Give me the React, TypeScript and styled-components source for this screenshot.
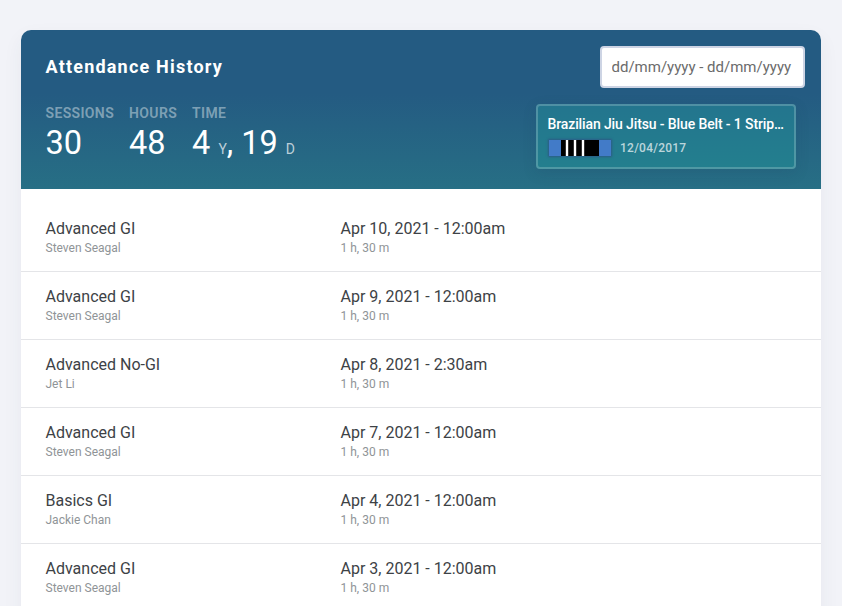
import styled, { createGlobalStyle } from 'styled-components'

const Palette = {
  page: '#f2f3f8',
  headerTop: '#245b82',
  headerBottom: '#276f85',
  text: '#3d4246',
  muted: '#8f9497',
  line: '#e4e5e8',
  beltBlue: '#427bc8',
}

const GlobalStyle = createGlobalStyle`
  * {
    box-sizing: border-box;
  }
  body {
    margin: 0;
    background: ${Palette.page};
    font-family: Roboto, sans-serif;
  }
`

const Page = styled.main`
  height: 100vh;
  padding: 30px 21px 0;
  overflow: hidden;
`

const Card = styled.section`
  min-height: 640px;
  background: #fff;
  border-radius: 10px;
  overflow: hidden;
  box-shadow: 0 8px 20px rgba(50, 60, 80, 0.06);
`

const Header = styled.header`
  height: 159px;
  padding: 16px 16px 0 24.5px;
  background: linear-gradient(180deg, ${Palette.headerTop} 40%, ${Palette.headerBottom} 100%);
`

const HeaderRow = styled.div<{ $gap?: string; $inset?: string }>`
  display: flex;
  justify-content: space-between;
  margin-top: ${({ $gap }) => $gap || '0'};
  padding-right: ${({ $inset }) => $inset || '0'};
`

const Title = styled.h1`
  margin: 0;
  color: #fff;
  font-size: 18px;
  font-weight: 700;
  line-height: 42px;
  letter-spacing: 1.2px;
`

const DateRange = styled.input`
  width: 205px;
  height: 42px;
  padding: 0 9.5px;
  border: 2px solid #cdd4e4;
  border-radius: 4px;
  background: #fff;
  font-family: inherit;
  font-size: 15px;
  outline: none;
  &::placeholder {
    color: #6b6b6b;
    opacity: 1;
  }
`

const Stats = styled.div`
  display: flex;
  gap: 15px;
`

const StatLabel = styled.div`
  color: rgba(255, 255, 255, 0.42);
  font-size: 14px;
  font-weight: 600;
  line-height: 18px;
  letter-spacing: 0.36px;
`

const StatValue = styled.div`
  color: #fff;
  font-size: 32.5px;
  line-height: 42px;
  white-space: nowrap;
`

const Unit = styled.span`
  color: rgba(255, 255, 255, 0.7);
  font-size: 14px;
`

const Rank = styled.div`
  width: 260px;
  height: 65px;
  padding: 9px 9px 0 9.5px;
  border: 2px solid rgba(255, 255, 255, 0.2);
  border-radius: 4px;
  background: linear-gradient(180deg, #23758e, #237f8e);
  background-origin: border-box;
  box-shadow: 0 4px 14px rgba(30, 60, 90, 0.15);
`

const RankName = styled.div`
  color: #fff;
  font-size: 14px;
  font-weight: 500;
  line-height: 18px;
  letter-spacing: -0.12px;
  white-space: nowrap;
`

const RankInfo = styled.div`
  display: flex;
  align-items: center;
  gap: 9px;
  margin-top: 7px;
  padding-left: 1.5px;
`

const Belt = styled.div`
  display: flex;
  width: 62px;
  height: 16px;
  padding: 0 12px;
  background: ${Palette.beltBlue};
  box-shadow: 0 0 2px 1px rgba(50, 70, 130, 0.6);
`

const BeltBar = styled.div`
  display: flex;
  gap: 4px;
  width: 38px;
  padding-left: 4px;
  background: #000;
`

const Stripe = styled.span`
  width: 4px;
  border: solid #333;
  border-width: 0 1px;
  background: #fff;
`

const RankDate = styled.span`
  color: rgba(255, 255, 255, 0.7);
  font-size: 12px;
  font-weight: 500;
  line-height: 16px;
  letter-spacing: 0.25px;
`

const List = styled.ul`
  margin: 0;
  padding: 15px 0 0;
  list-style: none;
`

const Row = styled.li`
  display: grid;
  grid-template-columns: 295px 1fr;
  height: 68px;
  padding: 14px 24px 0 24.5px;
  border-bottom: 1px solid ${Palette.line};
`

const Primary = styled.div`
  color: ${Palette.text};
  font-size: 16px;
  line-height: 21px;
`

const Secondary = styled.div`
  color: ${Palette.muted};
  font-size: 12px;
  line-height: 18px;
`

const sessions = [
  { name: 'Advanced GI', coach: 'Steven Seagal', date: 'Apr 10, 2021 - 12:00am' },
  { name: 'Advanced GI', coach: 'Steven Seagal', date: 'Apr 9, 2021 - 12:00am' },
  { name: 'Advanced No-GI', coach: 'Jet Li', date: 'Apr 8, 2021 - 2:30am' },
  { name: 'Advanced GI', coach: 'Steven Seagal', date: 'Apr 7, 2021 - 12:00am' },
  { name: 'Basics GI', coach: 'Jackie Chan', date: 'Apr 4, 2021 - 12:00am' },
  { name: 'Advanced GI', coach: 'Steven Seagal', date: 'Apr 3, 2021 - 12:00am' },
]

const App = () => {
  return (
    <Page>
      <GlobalStyle />
      <Card>
        <Header>
          <HeaderRow>
            <Title>Attendance History</Title>
            <DateRange placeholder="dd/mm/yyyy - dd/mm/yyyy" />
          </HeaderRow>
          <HeaderRow $gap="16px" $inset="9px">
            <Stats>
              <div>
                <StatLabel>SESSIONS</StatLabel>
                <StatValue>30</StatValue>
              </div>
              <div>
                <StatLabel>HOURS</StatLabel>
                <StatValue>48</StatValue>
              </div>
              <div>
                <StatLabel>TIME</StatLabel>
                <StatValue>
                  4 <Unit>Y</Unit>, 19 <Unit>D</Unit>
                </StatValue>
              </div>
            </Stats>
            <Rank>
              <RankName>Brazilian Jiu Jitsu - Blue Belt - 1 Strip…</RankName>
              <RankInfo>
                <Belt>
                  <BeltBar>
                    <Stripe />
                    <Stripe />
                    <Stripe />
                  </BeltBar>
                </Belt>
                <RankDate>12/04/2017</RankDate>
              </RankInfo>
            </Rank>
          </HeaderRow>
        </Header>
        <List>
          {sessions.map(({ name, coach, date }) => (
            <Row key={date}>
              <div>
                <Primary>{name}</Primary>
                <Secondary>{coach}</Secondary>
              </div>
              <div>
                <Primary>{date}</Primary>
                <Secondary>1 h, 30 m</Secondary>
              </div>
            </Row>
          ))}
        </List>
      </Card>
    </Page>
  )
}

export default App
